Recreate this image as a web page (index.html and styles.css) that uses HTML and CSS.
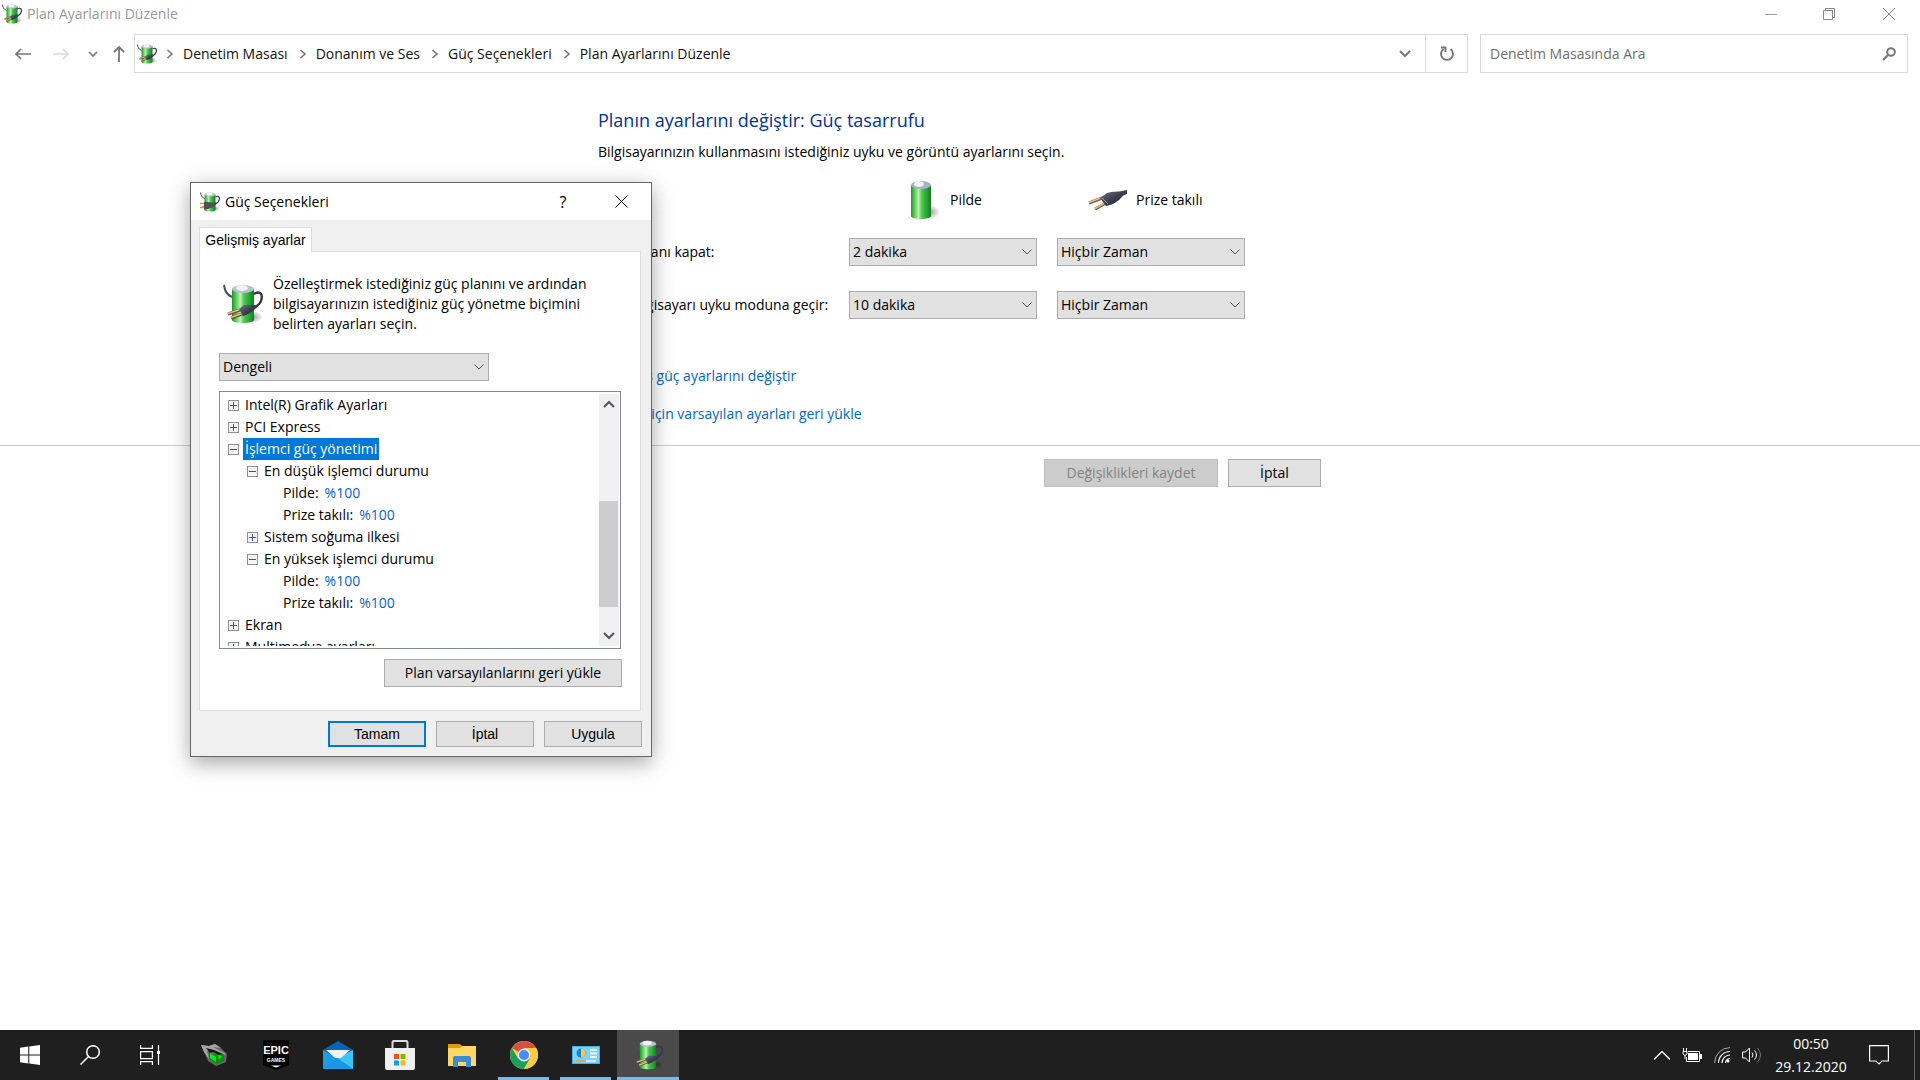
FILE: index.html
```html
<!DOCTYPE html>
<html lang="tr">
<head>
<meta charset="utf-8">
<title>Plan Ayarlarını Düzenle</title>
<link rel="stylesheet" href="styles.css">
</head>
<body>
<svg class="defs" width="0" height="0" aria-hidden="true">
  <defs>
    <linearGradient id="green" x1="0" x2="1" y1="0" y2="0">
      <stop offset="0" stop-color="#2c8c34"/><stop offset=".2" stop-color="#5fd35c"/><stop offset=".38" stop-color="#b9f3ae"/><stop offset=".55" stop-color="#4cc452"/><stop offset=".8" stop-color="#27a534"/><stop offset="1" stop-color="#157a22"/>
    </linearGradient>
    <linearGradient id="plugbody" x1="0" x2="1" y1="0" y2="1">
      <stop offset="0" stop-color="#777a8c"/><stop offset=".5" stop-color="#3c3f4d"/><stop offset="1" stop-color="#1e202b"/>
    </linearGradient>
    <radialGradient id="shade"><stop offset="0" stop-color="#000" stop-opacity=".4"/><stop offset="1" stop-color="#000" stop-opacity="0"/></radialGradient>
    <symbol id="power" viewBox="0 0 40 40">
      <ellipse cx="30" cy="33" rx="10" ry="6" fill="url(#shade)"/>
      <path d="M1 1c1 6 2 9 8 12" fill="none" stroke="#4a4c63" stroke-width="2"/>
      <path d="M9 5v31c0 4 22 4 22 0V5z" fill="url(#green)"/>
      <ellipse cx="20" cy="5" rx="11" ry="4" fill="#b9c0d0"/>
      <ellipse cx="19" cy="4" rx="6" ry="3" fill="#eef2fa"/>
      <path d="M31 10c7-4 9 1 7 7-1 4-5 5-8 8" fill="none" stroke="#34364b" stroke-width="2.400"/>
      <path d="M5 30l12-4M8 34l11-4" stroke="#6d4a2b" stroke-width="3"/>
      <path d="M5 29.500l12-4M8 33.500l11-4" stroke="#e3b98a" stroke-width="1.500"/>
      <path d="M16 25l5-4c5 0 8 0 12 0l-2 5c-4 3-7 5-11 6z" fill="url(#plugbody)"/>
    </symbol>
    <symbol id="expand" viewBox="0 0 11 11">
      <rect x=".5" y=".5" width="10" height="10" fill="#f4f4f4" stroke="#919191"/>
      <path d="M2 5.500h7M5.500 2v7" stroke="#3b53a4"/>
    </symbol>
    <symbol id="collapse" viewBox="0 0 11 11">
      <rect x=".5" y=".5" width="10" height="10" fill="#f4f4f4" stroke="#919191"/>
      <path d="M2 5.500h7" stroke="#3b53a4"/>
    </symbol>
    <symbol id="caret" viewBox="0 0 12 12"><path d="M1.500 3.500L6 8l4.500-4.500" fill="none" stroke="#555"/></symbol>
    <symbol id="crumb" viewBox="0 0 8 10"><path d="M1.500 1L6 5 1.500 9" fill="none" stroke="#777" stroke-width="1.600"/></symbol>
  </defs>
</svg>

<div class="desktop">
  <header class="titlebar">
    <svg class="icon-20"><use href="#power"/></svg>
    <span class="title">Plan Ayarlarını Düzenle</span>
    <div class="caption">
      <button class="cap" aria-label="Simge durumuna küçült"><svg width="12" height="12"><path d="M0 6.500h12" stroke="#999"/></svg></button>
      <button class="cap" aria-label="Önceki boyut"><svg width="12" height="12" fill="none" stroke="#888"><path d="M.5 2.500h9v9h-9zM2.500 2.500v-2h9v9h-2"/></svg></button>
      <button class="cap" aria-label="Kapat"><svg width="12" height="12"><path d="M0 0l12 12M12 0L0 12" stroke="#888"/></svg></button>
    </div>
  </header>

  <nav class="navbar">
    <div class="arrows">
      <button class="ghost" aria-label="Geri"><svg width="16" height="12" fill="none" stroke="#777" stroke-width="1.700"><path d="M1 6h15M6 1L1 6l5 5"/></svg></button>
      <button class="ghost" aria-label="İleri"><svg width="16" height="12" fill="none" stroke="#dadada" stroke-width="1.700"><path d="M0 6h15M10 1l5 5-5 5"/></svg></button>
      <button class="ghost small" aria-label="Son konumlar"><svg width="10" height="8" fill="none" stroke="#777" stroke-width="1.700"><path d="M1 2l4 4 4-4"/></svg></button>
      <button class="ghost small" aria-label="Yukarı"><svg width="12" height="16" fill="none" stroke="#777" stroke-width="1.800"><path d="M6 16V1M1 6l5-5 5 5"/></svg></button>
    </div>
    <div class="address">
      <svg class="icon-20"><use href="#power"/></svg>
      <ol class="crumbs">
        <li><svg class="sep"><use href="#crumb"/></svg><a href="#">Denetim Masası</a></li>
        <li><svg class="sep"><use href="#crumb"/></svg><a href="#">Donanım ve Ses</a></li>
        <li><svg class="sep"><use href="#crumb"/></svg><a href="#">Güç Seçenekleri</a></li>
        <li><svg class="sep"><use href="#crumb"/></svg><a href="#">Plan Ayarlarını Düzenle</a></li>
      </ol>
      <button class="ghost drop" aria-label="Önceki konumlar"><svg width="12" height="8" fill="none" stroke="#777" stroke-width="2"><path d="M1 1l5 5 5-5"/></svg></button>
      <button class="ghost refresh" aria-label="Yenile"><svg width="14" height="16" fill="none" stroke="#777" stroke-width="1.900"><path d="M10.500 3A6 6 0 1 1 3.500 3M1 1.500h4.500V6"/></svg></button>
    </div>
    <label class="search">
      <input type="search" placeholder="Denetim Masasında Ara" aria-label="Denetim Masasında Ara">
      <svg width="14" height="14" fill="none" stroke="#777"><circle cx="9" cy="5" r="3.800" stroke-width="2"/><path d="M6 8l-5 5" stroke-width="2.200"/></svg>
    </label>
  </nav>

  <main class="page">
    <section class="plan">
      <h1>Planın ayarlarını değiştir: Güç tasarrufu</h1>
      <p class="lead">Bilgisayarınızın kullanmasını istediğiniz uyku ve görüntü ayarlarını seçin.</p>
      <div class="grid">
        <span></span>
        <div class="colhead">
          <svg width="30" height="40" viewBox="0 0 30 40"><ellipse cx="20" cy="32" rx="10" ry="7" fill="url(#shade)"/><path d="M1 5v31c0 4 20 4 20 0V5z" fill="url(#green)"/><ellipse cx="11" cy="5" rx="10" ry="4" fill="#aab2c6"/><ellipse cx="9" cy="4" rx="5" ry="3" fill="#edf3f8"/></svg>
          <span>Pilde</span>
        </div>
        <div class="colhead plugged">
          <svg width="40" height="20" viewBox="0 0 40 20"><path d="M1 13l13-5M7 19l11-6" stroke="#7a5332" stroke-width="3"/><path d="M1 12.500l13-5M7 18.500l11-6" stroke="#e6bd92" stroke-width="1.500"/><path d="M12 8l7-5c6-2 11-1 15-2l5-1v4c-4 1-5 3-8 6-4 3-7 5-13 6z" fill="url(#plugbody)"/><path d="M14 8l6 6" stroke="#9a9dad"/></svg>
          <span>Prize takılı</span>
        </div>
        <label class="rowlabel" for="scr-b">Ekranı kapat:</label>
        <div class="combo"><select id="scr-b"><option>2 dakika</option></select><svg><use href="#caret"/></svg></div>
        <div class="combo"><select aria-label="Ekranı kapat, prize takılı"><option>Hiçbir Zaman</option></select><svg><use href="#caret"/></svg></div>
        <label class="rowlabel" for="slp-b">Bilgisayarı uyku moduna geçir:</label>
        <div class="combo"><select id="slp-b"><option>10 dakika</option></select><svg><use href="#caret"/></svg></div>
        <div class="combo"><select aria-label="Uyku modu, prize takılı"><option>Hiçbir Zaman</option></select><svg><use href="#caret"/></svg></div>
      </div>
      <div class="links">
        <a href="#">Gelişmiş güç ayarlarını değiştir</a>
        <a href="#">Bu plan için varsayılan ayarları geri yükle</a>
      </div>
    </section>
    <footer class="actions">
      <button class="btn save" disabled>Değişiklikleri kaydet</button>
      <button class="btn cancel">İptal</button>
    </footer>
  </main>

  <div class="dialog" role="dialog" aria-labelledby="dlg-title">
    <header class="dlg-bar">
      <svg width="20" height="20" viewBox="0 0 20 20"><use href="#power" width="20" height="20"/><path d="M0 11.500h5M0 15.500h5" stroke="#c9a227" stroke-width="1.400"/><path d="M4 10h4l5 1 3 1-3 3-5 2H4z" fill="#4c4f55"/></svg>
      <h2 id="dlg-title">Güç Seçenekleri</h2>
      <button class="ghost help" aria-label="Yardım">?</button>
      <button class="ghost close" aria-label="Kapat"><svg width="13" height="13"><path d="M.5 .5l12 12M12.500 .5l-12 12" stroke="#000"/></svg></button>
    </header>
    <div class="dlg-body">
      <div class="tabs"><button class="tab" role="tab" aria-selected="true">Gelişmiş ayarlar</button></div>
      <div class="panel">
        <div class="intro">
          <svg class="icon-40"><use href="#power"/></svg>
          <p>Özelleştirmek istediğiniz güç planını ve ardından<br>bilgisayarınızın istediğiniz güç yönetme biçimini<br>belirten ayarları seçin.</p>
        </div>
        <div class="combo scheme"><select aria-label="Güç planı"><option>Dengeli</option></select><svg><use href="#caret"/></svg></div>
        <div class="treebox">
          <ul class="tree">
            <li><button class="tog" aria-label="Genişlet"><svg><use href="#expand"/></svg></button><span>Intel(R) Grafik Ayarları</span></li>
            <li><button class="tog" aria-label="Genişlet"><svg><use href="#expand"/></svg></button><span>PCI Express</span></li>
            <li><button class="tog" aria-label="Daralt"><svg><use href="#collapse"/></svg></button><span class="selected">İşlemci güç yönetimi</span></li>
            <li class="l2"><button class="tog" aria-label="Daralt"><svg><use href="#collapse"/></svg></button><span>En düşük işlemci durumu</span></li>
            <li class="l3"><span>Pilde:</span><a href="#">%100</a></li>
            <li class="l3"><span>Prize takılı:</span><a href="#">%100</a></li>
            <li class="l2"><button class="tog" aria-label="Genişlet"><svg><use href="#expand"/></svg></button><span>Sistem soğuma ilkesi</span></li>
            <li class="l2"><button class="tog" aria-label="Daralt"><svg><use href="#collapse"/></svg></button><span>En yüksek işlemci durumu</span></li>
            <li class="l3"><span>Pilde:</span><a href="#">%100</a></li>
            <li class="l3"><span>Prize takılı:</span><a href="#">%100</a></li>
            <li><button class="tog" aria-label="Genişlet"><svg><use href="#expand"/></svg></button><span>Ekran</span></li>
            <li><button class="tog" aria-label="Genişlet"><svg><use href="#expand"/></svg></button><span>Multimedya ayarları</span></li>
          </ul>
          <div class="scroll">
            <svg width="12" height="8" fill="none" stroke="#555" stroke-width="2"><path d="M1 7l5-5 5 5"/></svg>
            <div class="track"><div class="thumb"></div></div>
            <svg width="12" height="8" fill="none" stroke="#555" stroke-width="2"><path d="M1 1l5 5 5-5"/></svg>
          </div>
        </div>
        <button class="btn restore">Plan varsayılanlarını geri yükle</button>
      </div>
      <div class="dlg-actions">
        <button class="btn sys default">Tamam</button>
        <button class="btn sys">İptal</button>
        <button class="btn sys">Uygula</button>
      </div>
    </div>
  </div>

  <footer class="taskbar">
    <div class="apps">
      <button class="app" aria-label="Başlat"><svg width="20" height="20" fill="#fff"><path d="M0 2.700L8.300 1.500v8H0zM9.300 1.400L20 0v9.500H9.300zM0 10.500h8.300v8L0 17.300zM9.300 10.500H20V20L9.300 18.600z"/></svg></button>
      <button class="app" aria-label="Ara"><svg width="20" height="20" fill="none" stroke="#fff" stroke-width="1.500"><circle cx="13" cy="7" r="6.300"/><path d="M8.500 11.500L.5 19.500"/></svg></button>
      <button class="app" aria-label="Görev Görünümü"><svg width="20" height="20" fill="none" stroke="#fff" stroke-width="1.200"><path d="M.6 0v3.400h11.800V0M.6 20v-3.400h11.800V20M.6 6.600h11.800v7H.6zM18.500 0v20"/><path fill="#fff" stroke="none" d="M17 6h3v3h-3z"/></svg></button>
      <button class="app" aria-label="Casper Excalibur"><svg width="26" height="22"><path d="M0 1l8 1 6-2 6 4 6 6-1 8-10 4-8-5-3-7z" fill="#666"/><path d="M0 1l8 1 6-2 6 4-8-1 13 7-4 1-12-5-3 1 2 8-5-7z" fill="#a5a5a5"/><path d="M5 4l8 2 9 4-2 2-8-4-3 1z" fill="#151515"/><path d="M8 9l7 2 8-1v7l-8 3-6-5z" fill="#0b8c12"/><path d="M9 9l6 4v5l-6-4zM17 11l4 1-3 4z" fill="#0aea15"/></svg></button>
      <button class="app" aria-label="Epic Games"><svg width="26" height="30" viewBox="0 0 26 30"><path d="M2 0h22q2 0 2 2v23l-13 5-13-5V2q0-2 2-2z" fill="#000"/><text x="13" y="14" text-anchor="middle" class="epic">EPIC</text><text x="13" y="22" text-anchor="middle" class="games">GAMES</text><path d="M8 25.500l5 2 5-2" fill="#fff"/></svg></button>
      <button class="app" aria-label="Posta"><svg width="30" height="28"><path d="M0 9L15 0l15 9v5H0z" fill="#0563ba"/><path d="M0 9l15 9L30 9v19H0z" fill="#1e9be5"/><path d="M30 9v19L14 17z" fill="#3cc4f5"/><path d="M0 28h30L14 17z" fill="#1c96e2"/><path d="M3 9h24l-9 8h-6z" fill="#f0f2f4"/></svg></button>
      <button class="app" aria-label="Microsoft Store"><svg width="30" height="30"><path d="M7.500 9V2.500q0-1.500 1.500-1.500h12q1.500 0 1.500 1.500V9" fill="none" stroke="#ddd" stroke-width="2"/><path d="M0 8h30v20q0 2-2 2H2q-2 0-2-2z" fill="#f0f0f0"/><path d="M9 14h5v5H9z" fill="#f1511b"/><path d="M15.500 14h5v5h-5z" fill="#80bc06"/><path d="M9 20.500h5v5H9z" fill="#00a3ee"/><path d="M15.500 20.500h5v5h-5z" fill="#fbbc09"/></svg></button>
      <button class="app" aria-label="Dosya Gezgini"><svg width="28" height="23"><path d="M0 0h12l2 2v4H0z" fill="#e09b08"/><path d="M0 4h12l2-2h14v20H0z" fill="#ffd765"/><path d="M5 23v-9q0-2 2-2h14q2 0 2 2v9h-5v-5h-8v5z" fill="#3a8cd6"/></svg></button>
      <button class="app open" aria-label="Google Chrome"><svg width="28" height="28" viewBox="0 0 28 28"><circle cx="14" cy="14" r="14" fill="#fc4"/><path d="M14 14L1.900 7A14 14 0 0 1 26.100 7z" fill="#db4f43"/><path d="M1.900 7A14 14 0 0 0 14 28l6-10.500H8z" fill="#1b9f5d"/><path d="M14 7h12.100a14 14 0 0 1-12.100 21l6-10.500z" fill="#fc4"/><circle cx="14" cy="14" r="6.400" fill="#f1f1f1"/><circle cx="14" cy="14" r="5" fill="#4a8af4"/></svg></button>
      <button class="app open" aria-label="Denetim Masası"><svg width="28" height="18"><path d="M0 0h28v18H0z" fill="#4ab1e8"/><path d="M1 1h26v16H1z" fill="#7fd0f8"/><circle cx="9" cy="7" r="4.500" fill="#1a83ce"/><path d="M9 7V2.500A4.500 4.500 0 0 1 9 11.500z" fill="#fbc54a"/><path d="M18 4h7M18 7.500h7M18 11h7" stroke="#e9f8ff" stroke-width="2"/><path d="M4 15h10" stroke="#eda429" stroke-width="1.500"/><path d="M14 15h10" stroke="#e6f7ff" stroke-width="1.500"/></svg></button>
      <button class="app open active" aria-label="Plan Ayarlarını Düzenle"><svg width="30" height="30"><use href="#power"/></svg></button>
    </div>
    <div class="tray">
      <svg width="16" height="9" fill="none" stroke="#fff" stroke-width="1.300"><path d="M0 8.500l8-8 8 8"/></svg>
      <svg width="20" height="14"><path d="M4.500 9v4.500h13v-10H6" fill="none" stroke="#fff"/><path d="M6 5h10v7H6z" fill="#fff"/><path d="M18 6h2v5h-2z" fill="#fff"/><path d="M1 3.500h4v2.500l-2 1.500L1 6zM1.500 3V0M4.500 3V0M3 7v4" fill="none" stroke="#fff"/></svg>
      <svg width="16" height="16" fill="none" stroke="#fff"><path d="M.6 16A15.400 15.400 0 0 1 16 .6" stroke="#aaa"/><path d="M4.500 16A11.500 11.500 0 0 1 16 4.500M8 16a8 8 0 0 1 8-8M11.500 16a4.500 4.500 0 0 1 4.500-4.500" stroke-width="1.200"/><circle cx="14" cy="14" r="1.500" fill="#fff" stroke="none"/></svg>
      <svg width="20" height="18" fill="none" stroke="#fff"><path d="M.6 6v6h2.900l4 4V2l-4 4z"/><path d="M10 6.500q2 2.500 0 5M12.500 4.500q4 4.500 0 9"/><path d="M15.500 2q6 7 0 14" stroke="#777"/></svg>
      <div class="clock"><time>00:50</time><time>29.12.2020</time></div>
      <svg class="notice" width="20" height="20" fill="none" stroke="#fff" stroke-width="1.200"><path d="M.6 .6h18.800v15.400H13l-3 3-3-3H.6z"/></svg>
    </div>
  </footer>
</div>
</body>
</html>
```
FILE: styles.css
```css
* { box-sizing: border-box; }
body { margin: 0; font: 14px/20px "Open Sans", "Noto Sans", sans-serif; color: #000; background: #fff; }
button, select, input { font: inherit; color: inherit; margin: 0; }
svg { display: block; flex: none; }
a { color: #0066cc; text-decoration: none; }
h1, h2, p, ul, ol { margin: 0; padding: 0; font-weight: 400; list-style: none; }
.defs { position: absolute; }
.desktop { position: relative; min-height: 100vh; display: flex; flex-direction: column; }
.icon-20 { width: 20px; height: 20px; }
.icon-40 { width: 40px; height: 40px; }
.ghost, .cap, .tog, .app { border: 0; background: none; padding: 0; display: flex; align-items: center; justify-content: center; }

/* window title bar */
.titlebar { height: 28px; display: flex; align-items: center; gap: 5px; padding-left: 2px; }
.title { color: #999; }
.caption { margin-left: auto; display: flex; }
.cap { width: 58px; height: 28px; }
.caption .cap:last-child { width: 62px; }

/* navigation row */
.navbar { display: flex; padding: 6px 12px 0 0; height: 45px; }
.arrows { width: 134px; display: flex; align-items: center; padding-left: 4px; }
.arrows .ghost { width: 38px; height: 39px; }
.arrows .ghost.small { width: 26px; }
.address { flex: 1; display: flex; align-items: center; border: 1px solid #d9d9d9; padding-left: 2px; }
.crumbs { flex: 1; display: flex; }
.crumbs li { display: flex; align-items: center; }
.crumbs a { color: #111; }
.sep { width: 8px; height: 10px; margin: 0 9px 0 11px; }
.crumbs li:first-child .sep { margin-left: 9px; }
.drop { width: 40px; height: 37px; }
.refresh { width: 42px; height: 37px; border-left: 1px solid #d9d9d9; }
.search { width: 428px; margin-left: 12px; border: 1px solid #d9d9d9; display: flex; align-items: center; padding: 0 11px 0 9px; }
.search input { flex: 1; border: 0; outline: 0; padding: 0; background: none; }
.search input::placeholder { color: #6d6d6d; opacity: 1; }

/* plan page */
.page { flex: 1; }
.plan { padding: 34px 0 21px 598px; border-bottom: 1px solid #ccc; }
h1 { font-size: 18px; line-height: 26px; color: #003399; }
.lead { margin-top: 9px; }
.grid { display: grid; grid-template-columns: 231px 188px 188px; grid-template-rows: 58px 53px 28px; column-gap: 20px; align-items: start; margin-top: 18px; }
.colhead { display: flex; align-items: center; gap: 10px; padding-left: 61px; height: 40px; }
.colhead.plugged { padding-left: 31px; gap: 8px; }
.rowlabel { padding-left: 32px; white-space: nowrap; line-height: 28px; }
.combo { position: relative; height: 28px; }
.combo select { width: 100%; height: 28px; appearance: none; border: 1px solid #adadad; border-radius: 0; background: #e1e1e1; padding: 0 3px; }
.combo svg { position: absolute; right: 4px; top: 8px; width: 12px; height: 12px; pointer-events: none; }
.links { margin-top: 47px; display: flex; flex-direction: column; align-items: flex-start; gap: 18px; }
.actions { display: flex; gap: 10px; padding: 13px 0 0 1044px; }
.btn { height: 28px; padding: 0; border: 1px solid #adadad; background: #e1e1e1; }
.save { width: 174px; }
.cancel { width: 93px; }
.save:disabled { background: #ccc; border-color: #bfbfbf; color: #838383; }

/* power options dialog */
.dialog { position: absolute; left: 190px; top: 182px; width: 462px; border: 1px solid #666; background: #f0f0f0; box-shadow: 0 6px 20px rgba(0, 0, 0, .35); }
.dlg-bar { height: 37px; background: #fff; display: flex; align-items: center; padding-left: 9px; }
.dlg-bar h2 { flex: 1; font-size: 14px; margin-left: 5px; }
.help { width: 58px; height: 37px; font-size: 16px; }
.close { width: 59px; height: 37px; }
.dlg-body { padding: 7px 9px 9px 8px; }
.tabs { display: flex; }
.tab { height: 25px; width: 113px; margin-bottom: -1px; position: relative; border: 1px solid #dcdcdc; border-bottom: 0; background: #fff; padding: 0; font: 14px/20px "Liberation Sans", sans-serif; }
.panel { background: #fff; border: 1px solid #dcdcdc; width: 442px; padding: 22px 19px 23px; display: flex; flex-direction: column; }
.intro { display: flex; gap: 10px; padding-left: 4px; align-items: center; white-space: nowrap; }
.scheme { width: 270px; margin-top: 19px; }
.treebox { margin-top: 10px; width: 402px; height: 258px; border: 1px solid #828790; padding: 2px 1px 2px 2px; display: flex; overflow: hidden; }
.tree { flex: 1; height: 252px; overflow: hidden; padding-left: 6px; }
.tree li { height: 22px; display: flex; align-items: center; white-space: nowrap; }
.tree .l2 { padding-left: 19px; }
.tree .l3 { padding-left: 53px; }
.tree span { padding: 0 2px; line-height: 22px; }
.tree a { margin-left: 4px; }
.tog { margin-right: 4px; }
.tog svg { width: 11px; height: 11px; }
.tree .selected { background: #0078d7; color: #fff; }
.scroll { width: 20px; background: #f0f0f0; display: flex; flex-direction: column; align-items: center; padding: 6px 0; }
.track { flex: 1; width: 20px; padding-top: 93px; }
.thumb { height: 106px; width: 19px; background: #cdcdcd; }
.restore { width: 238px; align-self: flex-end; margin: 10px -1px 0 0; }
.dlg-actions { display: flex; justify-content: flex-end; gap: 10px; margin-top: 10px; }
.sys { width: 98px; height: 26px; font: 14px/20px "Liberation Sans", sans-serif; }
.default { border: 2px solid #0078d7; }

/* taskbar */
.taskbar { height: 50px; background: #1f1f1f; color: #fff; display: flex; justify-content: space-between; }
.apps { display: flex; }
.app { width: 62px; height: 50px; position: relative; }
.app:nth-child(-n+3) { width: 60px; }
.app:nth-child(3) { margin-right: 3px; }
.open::after { content: ""; position: absolute; left: 5px; right: 6px; bottom: 0; height: 3px; background: #76b9ed; }
.active { background: #4a4a4a; }
.active::after { left: 0; right: 0; }
.epic { font: bold 11px "Liberation Sans Narrow", "Liberation Sans", sans-serif; fill: #fff; }
.games { font: bold 5px "Liberation Sans", sans-serif; fill: #fff; }
.tray { display: flex; align-items: center; gap: 12px; margin-right: 5px; padding-right: 25px; border-right: 1px solid #666; }
.clock { display: flex; flex-direction: column; align-items: center; line-height: 23px; width: 74px; }
.notice { margin-left: 9px; }
```
